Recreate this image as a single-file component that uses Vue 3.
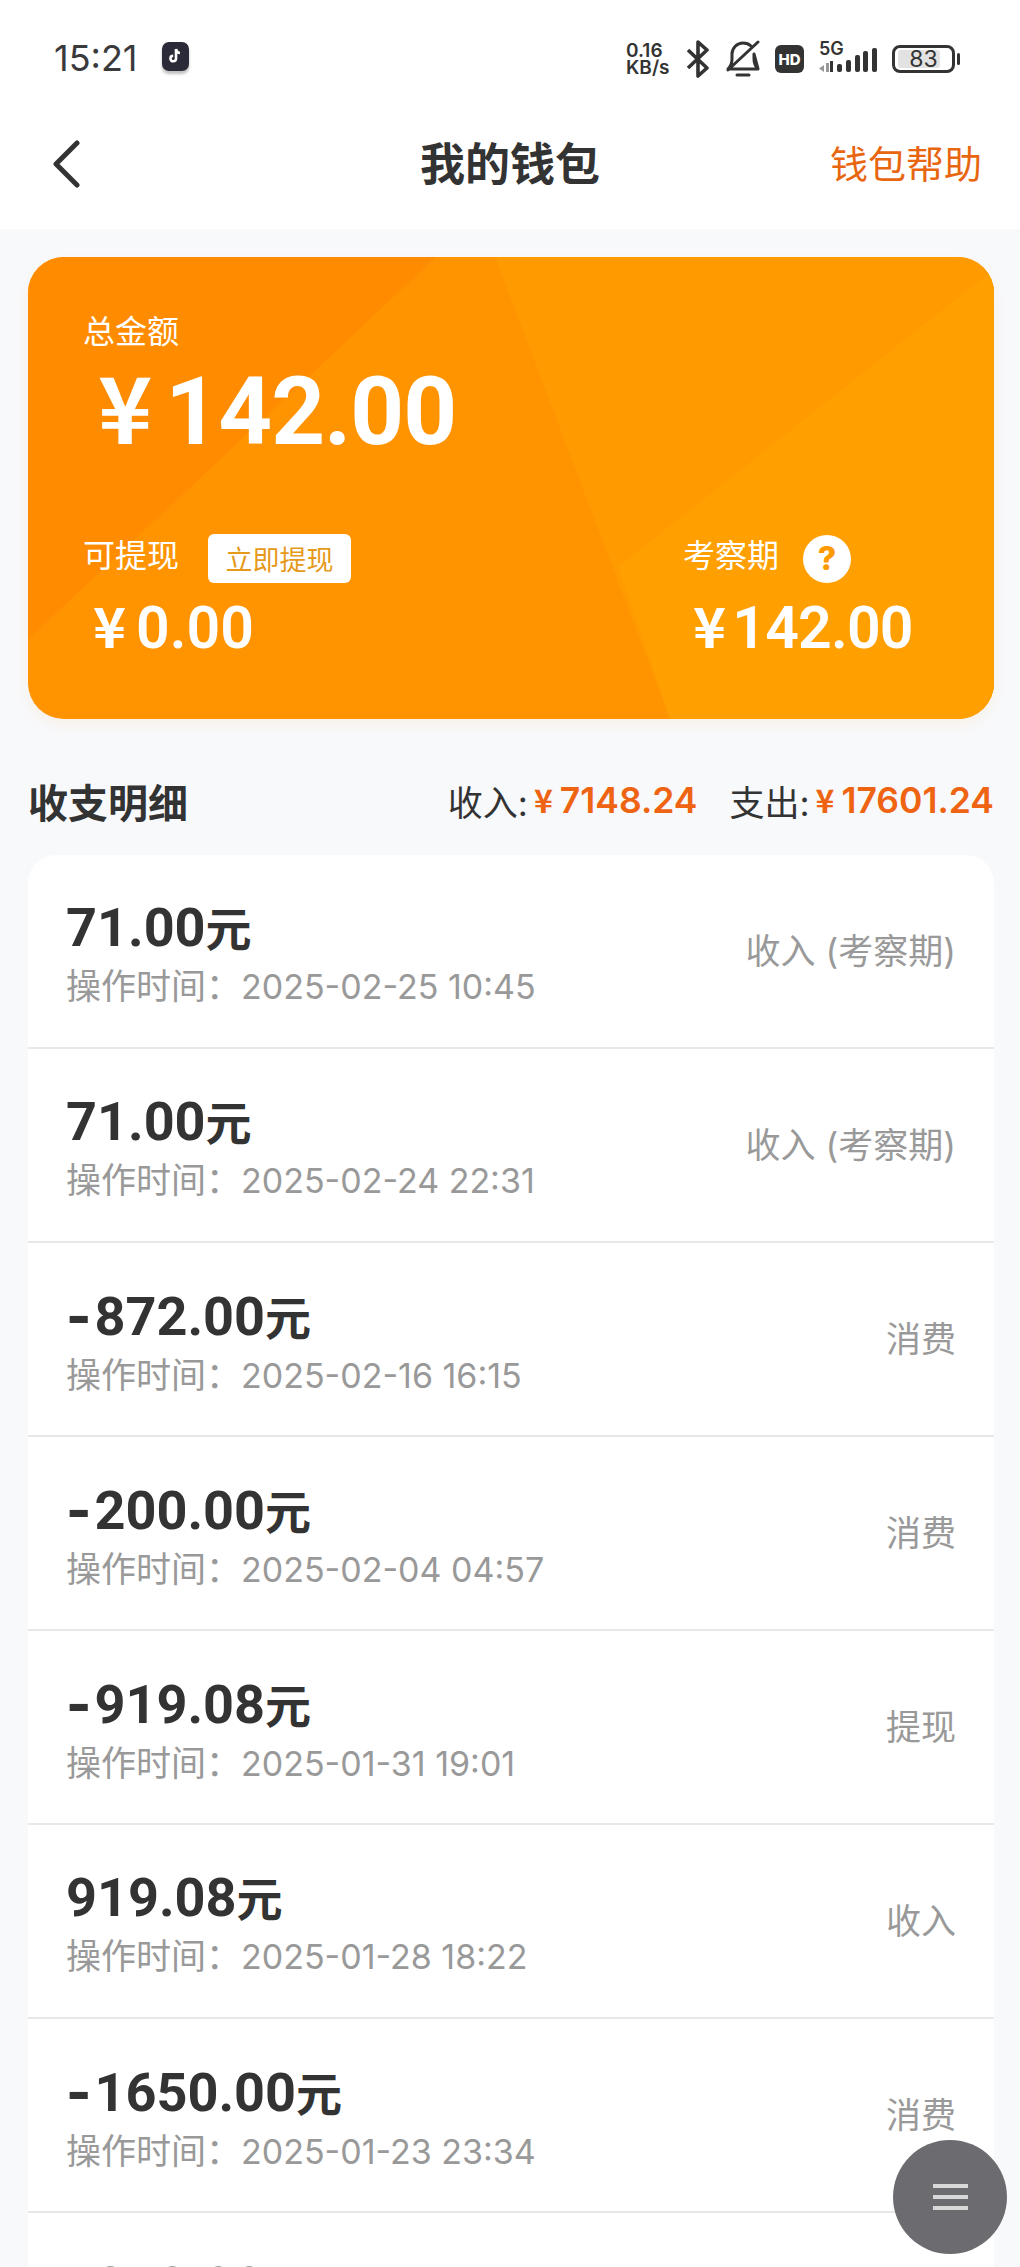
<template>
  <div class="page">
    <div class="top">
      <div class="status">
        <span class="clock">15:21</span>
        <span class="app-badge">
          <svg width="16" height="18" viewBox="0 0 16 18"><path d="M9 2v9.5a2.8 2.8 0 1 1-2.8-2.8M9 2c.3 2.4 1.8 3.8 4 4" fill="none" stroke="#fff" stroke-width="2.6"/></svg>
        </span>
        <div class="status-right">
          <div class="speed"><span>0.16</span><span>KB/s</span></div>
          <svg class="ic bt" width="24" height="38" viewBox="0 0 24 38"><path d="M2 10l19 18-9 8V2l9 8L2 28" fill="none" stroke="#333" stroke-width="3.6" stroke-linejoin="round"/></svg>
          <svg class="ic bell" width="36" height="38" viewBox="0 0 36 38"><path d="M3 29c3-3 4-5 4-10v-5C7 8 12 3 18 3c3 0 6 1 8 3M29 14v5c0 5 1 7 4 10zM3 29h30M12 35h12M3 30L33 2" fill="none" stroke="#333" stroke-width="3" stroke-linecap="round" stroke-linejoin="round"/></svg>
          <span class="hd">HD</span>
          <div class="signal">
            <span class="five-g">5G</span>
            <svg width="58" height="28" viewBox="0 0 58 28"><path d="M5 17v7l-5-3.500zM7 15h3v9H7z" fill="#999"/><path d="M11 13h3v11h-3z" fill="#333"/><rect x="18" y="16" width="5" height="8" rx="2" fill="#333"/><rect x="27" y="12" width="5" height="12" rx="2" fill="#333"/><rect x="36" y="7" width="5" height="17" rx="2" fill="#333"/><rect x="44" y="3" width="5" height="21" rx="2" fill="#333"/><rect x="53" y="0" width="5" height="24" rx="2" fill="#333"/></svg>
          </div>
          <div class="battery">
            <div class="battery-body"><div class="battery-fill"></div><span>83</span></div>
            <div class="battery-cap"></div>
          </div>
        </div>
      </div>
      <div class="nav">
        <svg class="back" width="32" height="48" viewBox="0 0 32 48"><path d="M27 3L6 24l21 21" fill="none" stroke="#333" stroke-width="5" stroke-linecap="round" stroke-linejoin="round"/></svg>
        <div class="nav-title">我的钱包</div>
        <div class="nav-help">钱包帮助</div>
      </div>
    </div>

    <div class="content">
      <div class="card">
        <svg class="card-bg" viewBox="0 0 966 462" preserveAspectRatio="none">
          <rect width="966" height="462" fill="#ff9300"/>
          <polygon points="0,0 408,0 0,382" fill="#ff8b00"/>
          <polygon points="467,0 966,0 966,462 642,462" fill="#ff9a00"/>
          <polygon points="966,12 590,310 642,462 966,462" fill="#ff9f00"/>
        </svg>
        <div class="card-inner">
          <div class="card-label">总金额</div>
          <div class="total"><span class="yen">¥</span>142.00</div>
          <div class="card-bottom">
            <div>
              <div class="label-row">
                <span class="card-label">可提现</span>
                <span class="withdraw">立即提现</span>
              </div>
              <div class="sub-amount"><span class="yen">¥</span>0.00</div>
            </div>
            <div class="probation">
              <div class="label-row">
                <span class="card-label">考察期</span>
                <span class="help">?</span>
              </div>
              <div class="sub-amount"><span class="yen">¥</span>142.00</div>
            </div>
          </div>
        </div>
      </div>

      <div class="section-head">
        <div class="section-title">收支明细</div>
        <div class="summary">
          <span>收入:</span><span class="money"><span class="yen">¥</span>7148.24</span>
          <span class="out">支出:</span><span class="money"><span class="yen">¥</span>17601.24</span>
        </div>
      </div>

      <div class="list">
        <div v-for="item in records" :key="item.time" class="row">
          <div>
            <div class="amount"><span v-if="item.minus" class="sign">-</span>{{ item.amount }}<span class="unit">元</span></div>
            <div class="time">操作时间：<span class="date">{{ item.time }}</span></div>
          </div>
          <div class="kind">{{ item.kind }}</div>
        </div>
      </div>
    </div>

    <div class="fab">
      <span></span><span></span><span></span>
    </div>
  </div>
</template>

<script setup>
const records = [
  { amount: '71.00', time: '2025-02-25 10:45', kind: '收入 (考察期)' },
  { amount: '71.00', time: '2025-02-24 22:31', kind: '收入 (考察期)' },
  { minus: true, amount: '872.00', time: '2025-02-16 16:15', kind: '消费' },
  { minus: true, amount: '200.00', time: '2025-02-04 04:57', kind: '消费' },
  { minus: true, amount: '919.08', time: '2025-01-31 19:01', kind: '提现' },
  { amount: '919.08', time: '2025-01-28 18:22', kind: '收入' },
  { minus: true, amount: '1650.00', time: '2025-01-23 23:34', kind: '消费' },
  { minus: true, amount: '212.00', time: '2025-01-20 12:10', kind: '消费' }
]
</script>

<style>
html, body {
  margin: 0;
  background: #f8f9fb;
}
</style>

<style scoped>
.page {
  position: relative;
  width: 1020px;
  height: 2267px;
  overflow: hidden;
  background: #f8f9fb;
  color: #333;
  font-family: Inter, "Noto Sans CJK SC", sans-serif;
}
.top {
  height: 229px;
  background: #fff;
}
.status {
  height: 116px;
  padding: 0 54px;
  display: flex;
  align-items: center;
}
.clock {
  font-size: 36px;
  color: #3a3a3c;
  line-height: 1;
  margin-top: -1px;
}
.app-badge {
  width: 27px;
  height: 29px;
  margin-left: 24px;
  margin-top: -4px;
  border-radius: 7px;
  background: #2a2a38;
  box-shadow: 0 3px 3px rgba(0,0,0,0.25);
  display: flex;
  align-items: center;
  justify-content: center;
}
.status-right {
  margin-left: auto;
  margin-right: 6px;
  margin-top: 2px;
  display: flex;
  align-items: center;
}
.speed {
  display: flex;
  flex-direction: column;
  width: 51px;
  font-size: 19px;
  font-weight: 600;
  line-height: 17px;
  white-space: nowrap;
  color: #333;
}
.ic {
  display: block;
}
.bt {
  margin-left: 9px;
}
.bell {
  margin-left: 15px;
}
.hd {
  margin-left: 14px;
  width: 29px;
  height: 28px;
  border-radius: 6px;
  background: #333;
  color: #fff;
  font-size: 15px;
  font-weight: 800;
  display: flex;
  align-items: center;
  justify-content: center;
}
.signal {
  position: relative;
  margin-left: 15px;
  width: 58px;
  height: 34px;
}
.signal svg {
  position: absolute;
  left: 0;
  bottom: 0;
}
.five-g {
  position: absolute;
  left: 0;
  top: -3px;
  font-size: 18px;
  font-weight: 600;
  line-height: 20px;
}
.battery {
  margin-left: 15px;
  display: flex;
  align-items: center;
  gap: 2px;
}
.battery-body {
  position: relative;
  width: 63px;
  height: 28px;
  box-sizing: border-box;
  border: 3px solid #333;
  border-radius: 8px;
  display: flex;
  align-items: center;
  justify-content: center;
  font-size: 23px;
  color: #333;
}
.battery-fill {
  position: absolute;
  left: 3px;
  top: 2px;
  bottom: 2px;
  width: 42px;
  border-radius: 3px;
  background: #e2e2e2;
}
.battery-body span {
  position: relative;
}
.battery-cap {
  width: 3px;
  height: 12px;
  border-radius: 2px;
  background: #333;
}
.nav {
  position: relative;
  height: 97px;
  display: flex;
  align-items: center;
  justify-content: center;
}
.back {
  position: absolute;
  left: 50px;
  top: 24px;
}
.nav-title {
  font-size: 45px;
  font-weight: 700;
  color: #333;
  line-height: 1;
}
.nav-help {
  position: absolute;
  right: 38px;
  top: 26px;
  font-size: 38px;
  line-height: 1.2;
  color: #e8660f;
}
.content {
  padding: 28px 26px 0 28px;
}
.card {
  position: relative;
  height: 462px;
  border-radius: 36px;
  overflow: hidden;
  color: #fff;
  box-shadow: 0 6px 14px rgba(255, 150, 0, 0.08);
}
.card-bg {
  position: absolute;
  inset: 0;
  width: 100%;
  height: 100%;
}
.card-inner {
  position: relative;
  padding: 56px 0 0 55px;
}
.card-label {
  font-size: 32px;
  line-height: 38px;
}
.label-row .card-label {
  margin-top: -5px;
}
.yen {
  font-family: "Noto Sans CJK SC", sans-serif;
  line-height: 0;
}
.total {
  margin: 7px 0 0 15px;
  font-family: Roboto, "Noto Sans CJK SC", sans-serif;
  font-size: 94px;
  font-weight: 700;
  line-height: 108px;
  letter-spacing: -1px;
}
.total .yen {
  margin-right: 14px;
  font-size: 92px;
}
.card-bottom {
  display: flex;
  justify-content: space-between;
  margin-top: 68px;
  padding-right: 54px;
}
.label-row {
  display: flex;
  align-items: center;
  height: 49px;
}
.withdraw {
  margin-left: 29px;
  width: 143px;
  height: 49px;
  border-radius: 6px;
  background: #fff;
  color: #e59a1c;
  font-size: 27px;
  display: flex;
  align-items: center;
  justify-content: center;
}
.help {
  margin-left: 24px;
  width: 48px;
  height: 48px;
  border-radius: 50%;
  background: #fff;
  color: #ff9a00;
  font-size: 32px;
  font-weight: 800;
  display: flex;
  align-items: center;
  justify-content: center;
}
.sub-amount {
  margin: 11px 0 0 10px;
  font-family: Roboto, "Noto Sans CJK SC", sans-serif;
  font-size: 59px;
  font-weight: 600;
  line-height: 68px;
}
.sub-amount .yen {
  margin-right: 10px;
  font-size: 56px;
}
.probation {
  width: 257px;
}
.probation .sub-amount {
  margin-left: 10px;
  letter-spacing: -0.8px;
}
.probation .sub-amount .yen {
  margin-right: 7px;
}
.section-head {
  display: flex;
  align-items: center;
  justify-content: space-between;
  box-sizing: border-box;
  height: 136px;
  padding: 27px 0 0 0;
}
.section-title {
  font-size: 40px;
  font-weight: 700;
  color: #333;
}
.summary {
  font-size: 35px;
  color: #333;
  display: flex;
  align-items: center;
}
.money {
  margin-left: 6px;
  font-size: 35.5px;
  font-weight: 600;
  color: #ee6412;
}
.money .yen {
  margin-right: 7px;
  font-size: 32px;
}
.out {
  margin-left: 32px;
}
.list {
  background: #fff;
  border-radius: 28px 28px 0 0;
}
.row {
  height: 194px;
  box-sizing: border-box;
  border-bottom: 2px solid #e8e8e8;
  padding: 43px 38px 0;
  display: flex;
  justify-content: space-between;
}
.amount {
  font-family: Roboto, "Noto Sans CJK SC", sans-serif;
  font-size: 54px;
  font-weight: 700;
  line-height: 60px;
  color: #333;
}
.sign {
  font-family: Inter, sans-serif;
  font-weight: 800;
  margin-right: 3px;
}
.unit {
  font-family: "Noto Sans CJK SC", sans-serif;
  font-size: 46px;
  line-height: 0;
}
.time {
  margin-top: 6px;
  font-size: 35px;
  line-height: 44px;
  color: #999;
}
.date {
  font-size: 34px;
}
.kind {
  margin-top: 31px;
  font-size: 35px;
  line-height: 44px;
  color: #999;
}
.fab {
  position: absolute;
  left: 893px;
  top: 2140px;
  width: 114px;
  height: 114px;
  border-radius: 50%;
  background: #6c6c70;
  display: flex;
  flex-direction: column;
  align-items: center;
  justify-content: center;
  gap: 7px;
}
.fab span {
  width: 35px;
  height: 4px;
  background: #d8d8d8;
}
</style>
